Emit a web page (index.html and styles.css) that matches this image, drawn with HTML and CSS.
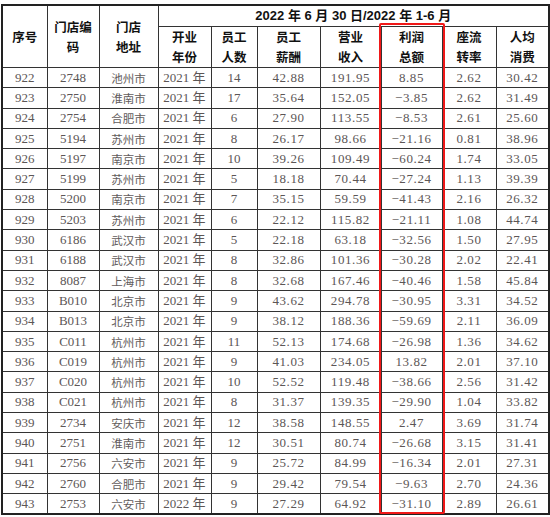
FILE: index.html
```html
<!DOCTYPE html>
<html lang="zh">
<head>
<meta charset="utf-8">
<link rel="stylesheet" href="styles.css">
</head>
<body>
<div class="wrap">
<table class="grid">
<colgroup>
<col class="c1"><col class="c2"><col class="c3"><col class="c4"><col class="c5"><col class="c6"><col class="c7"><col class="c8"><col class="c9"><col class="c10">
</colgroup>
<thead>
<tr class="h1">
<th rowspan="2">序号</th>
<th rowspan="2">门店编<br>码</th>
<th rowspan="2">门店<br>地址</th>
<th colspan="7">2022 年 6 月 30 日/2022 年 1-6 月</th>
</tr>
<tr class="h2">
<th>开业<br>年份</th>
<th>员工<br>人数</th>
<th>员工<br>薪酬</th>
<th>营业<br>收入</th>
<th>利润<br>总额</th>
<th>座流<br>转率</th>
<th>人均<br>消费</th>
</tr>
</thead>
<tbody>
<tr><td>922</td><td>2748</td><td class="cn">池州市</td><td>2021 年</td><td>14</td><td class="d">42.88</td><td class="d">191.95</td><td class="d">8.85</td><td class="d">2.62</td><td class="d">30.42</td></tr>
<tr><td>923</td><td>2750</td><td class="cn">淮南市</td><td>2021 年</td><td>17</td><td class="d">35.64</td><td class="d">152.05</td><td class="d">−3.85</td><td class="d">2.62</td><td class="d">31.49</td></tr>
<tr><td>924</td><td>2754</td><td class="cn">合肥市</td><td>2021 年</td><td>6</td><td class="d">27.90</td><td class="d">113.55</td><td class="d">−8.53</td><td class="d">2.61</td><td class="d">25.60</td></tr>
<tr><td>925</td><td>5194</td><td class="cn">苏州市</td><td>2021 年</td><td>8</td><td class="d">26.17</td><td class="d">98.66</td><td class="d">−21.16</td><td class="d">0.81</td><td class="d">38.96</td></tr>
<tr><td>926</td><td>5197</td><td class="cn">南京市</td><td>2021 年</td><td>10</td><td class="d">39.26</td><td class="d">109.49</td><td class="d">−60.24</td><td class="d">1.74</td><td class="d">33.05</td></tr>
<tr><td>927</td><td>5199</td><td class="cn">苏州市</td><td>2021 年</td><td>5</td><td class="d">18.18</td><td class="d">70.44</td><td class="d">−27.24</td><td class="d">1.13</td><td class="d">39.39</td></tr>
<tr><td>928</td><td>5200</td><td class="cn">南京市</td><td>2021 年</td><td>7</td><td class="d">35.15</td><td class="d">59.59</td><td class="d">−41.43</td><td class="d">2.16</td><td class="d">26.32</td></tr>
<tr><td>929</td><td>5203</td><td class="cn">苏州市</td><td>2021 年</td><td>6</td><td class="d">22.12</td><td class="d">115.82</td><td class="d">−21.11</td><td class="d">1.08</td><td class="d">44.74</td></tr>
<tr><td>930</td><td>6186</td><td class="cn">武汉市</td><td>2021 年</td><td>5</td><td class="d">22.18</td><td class="d">63.18</td><td class="d">−32.56</td><td class="d">1.50</td><td class="d">27.95</td></tr>
<tr><td>931</td><td>6188</td><td class="cn">武汉市</td><td>2021 年</td><td>8</td><td class="d">32.86</td><td class="d">101.36</td><td class="d">−30.28</td><td class="d">2.02</td><td class="d">22.41</td></tr>
<tr><td>932</td><td>8087</td><td class="cn">上海市</td><td>2021 年</td><td>8</td><td class="d">32.68</td><td class="d">167.46</td><td class="d">−40.46</td><td class="d">1.58</td><td class="d">45.84</td></tr>
<tr><td>933</td><td>B010</td><td class="cn">北京市</td><td>2021 年</td><td>9</td><td class="d">43.62</td><td class="d">294.78</td><td class="d">−30.95</td><td class="d">3.31</td><td class="d">34.52</td></tr>
<tr><td>934</td><td>B013</td><td class="cn">北京市</td><td>2021 年</td><td>9</td><td class="d">38.12</td><td class="d">188.36</td><td class="d">−59.69</td><td class="d">2.11</td><td class="d">36.09</td></tr>
<tr><td>935</td><td>C011</td><td class="cn">杭州市</td><td>2021 年</td><td>11</td><td class="d">52.13</td><td class="d">174.68</td><td class="d">−26.98</td><td class="d">1.36</td><td class="d">34.62</td></tr>
<tr><td>936</td><td>C019</td><td class="cn">杭州市</td><td>2021 年</td><td>9</td><td class="d">41.03</td><td class="d">234.05</td><td class="d">13.82</td><td class="d">2.01</td><td class="d">37.10</td></tr>
<tr><td>937</td><td>C020</td><td class="cn">杭州市</td><td>2021 年</td><td>10</td><td class="d">52.52</td><td class="d">119.48</td><td class="d">−38.66</td><td class="d">2.56</td><td class="d">31.42</td></tr>
<tr><td>938</td><td>C021</td><td class="cn">杭州市</td><td>2021 年</td><td>8</td><td class="d">31.37</td><td class="d">139.35</td><td class="d">−29.90</td><td class="d">1.04</td><td class="d">33.82</td></tr>
<tr><td>939</td><td>2734</td><td class="cn">安庆市</td><td>2021 年</td><td>12</td><td class="d">38.58</td><td class="d">148.55</td><td class="d">2.47</td><td class="d">3.69</td><td class="d">31.74</td></tr>
<tr><td>940</td><td>2751</td><td class="cn">淮南市</td><td>2021 年</td><td>12</td><td class="d">30.51</td><td class="d">80.74</td><td class="d">−26.68</td><td class="d">3.15</td><td class="d">31.41</td></tr>
<tr><td>941</td><td>2756</td><td class="cn">六安市</td><td>2021 年</td><td>9</td><td class="d">25.72</td><td class="d">84.99</td><td class="d">−16.34</td><td class="d">2.01</td><td class="d">27.31</td></tr>
<tr><td>942</td><td>2760</td><td class="cn">合肥市</td><td>2021 年</td><td>9</td><td class="d">29.42</td><td class="d">79.54</td><td class="d">−9.63</td><td class="d">2.70</td><td class="d">24.36</td></tr>
<tr><td>943</td><td>2753</td><td class="cn">六安市</td><td>2022 年</td><td>9</td><td class="d">27.29</td><td class="d">64.92</td><td class="d">−31.10</td><td class="d">2.89</td><td class="d">26.61</td></tr>
</tbody>
</table>
<div class="highlight"></div>
</div>
</body>
</html>
```
FILE: styles.css
```css
html, body {
  margin: 0;
  padding: 0;
  background: #ffffff;
}
.wrap {
  position: relative;
  padding: 4px 0 0 1px;
  width: 549px;
}
.grid {
  border-collapse: collapse;
  table-layout: fixed;
  width: 548px;
  border: 2px solid #222;
  font-family: "Liberation Serif", "Noto Sans CJK SC", serif;
  font-size: 13px;
  color: #5c5656;
}
.c1 { width: 45px; }
.c2 { width: 52px; }
.c3 { width: 59px; }
.c4 { width: 53px; }
.c5 { width: 46px; }
.c6 { width: 63px; }
.c7 { width: 61px; }
.c8 { width: 61px; }
.c9 { width: 54px; }
.c10 { width: 53px; }
.grid th, .grid td {
  border: 1px solid #333;
  padding: 0;
  text-align: center;
  vertical-align: middle;
  white-space: nowrap;
}
.grid th {
  font-family: "Noto Sans CJK SC", sans-serif;
  font-weight: 700;
  color: #111;
  font-size: 12.5px;
  line-height: 20px;
}
.h1 { height: 20px; }
.h1 th[colspan] {
  font-family: "Liberation Sans", "Noto Sans CJK SC", sans-serif;
  font-size: 13px;
}
.h2 { height: 40px; }
.grid tbody tr { height: 20.3px; }
.grid td { line-height: 18px; }
.grid td.cn {
  font-family: "Noto Sans CJK SC", serif;
  font-size: 11.5px;
  letter-spacing: 0;
  color: #625c5c;
}
.grid td.d {
  letter-spacing: 0.6px;
}
.highlight {
  position: absolute;
  left: 379px;
  top: 23px;
  width: 62px;
  height: 487px;
  border: 2.5px solid #f01818;
  border-radius: 2px;
  pointer-events: none;
}
```
